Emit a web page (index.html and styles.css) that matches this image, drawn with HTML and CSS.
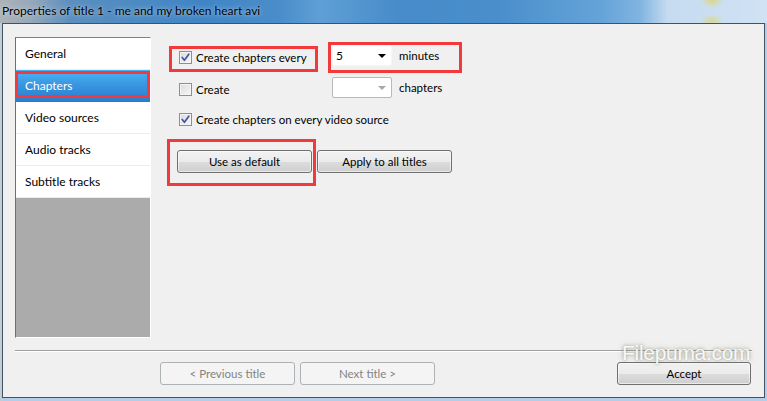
FILE: index.html
```html
<!DOCTYPE html>
<html>
<head>
<meta charset="utf-8">
<title>Properties of title 1</title>
<link rel="stylesheet" href="styles.css">
</head>
<body>
<div class="screen">
  <div class="titlebar"><span class="title-text">Properties of title 1 - me and my broken heart avi</span></div>
  <div class="frame">
    <div class="window">
      <div class="main">
        <ul class="list">
          <li class="item">General</li>
          <li class="item selected"><span class="mark mark-item"></span>Chapters</li>
          <li class="item">Video sources</li>
          <li class="item">Audio tracks</li>
          <li class="item">Subtitle tracks</li>
          <li class="filler"></li>
        </ul>
        <div class="panel">
          <div class="row row1">
            <div class="col-check">
              <label class="check mark-host"><span class="mark mark-check"></span><span class="cb"><svg width="13" height="13" viewBox="0 0 13 13"><path d="M3.2 6.4 L5.4 9.3 L9.8 3.2" fill="none" stroke="#44579a" stroke-width="1.7" stroke-linecap="round" stroke-linejoin="round"/></svg></span><span>Create chapters every</span></label>
            </div>
            <div class="combo-group mark-host"><span class="mark mark-combo"></span><span class="combo focus"><span class="val">5</span><span class="arrow"></span></span><span class="unit">minutes</span></div>
          </div>
          <div class="row row2">
            <div class="col-check">
              <label class="check"><span class="cb"></span><span>Create</span></label>
            </div>
            <div class="combo-group"><span class="combo"><span class="val"></span><span class="arrow gray"></span></span><span class="unit">chapters</span></div>
          </div>
          <div class="row row3">
            <div class="col-check wide">
              <label class="check"><span class="cb"><svg width="13" height="13" viewBox="0 0 13 13"><path d="M3.2 6.4 L5.4 9.3 L9.8 3.2" fill="none" stroke="#44579a" stroke-width="1.7" stroke-linecap="round" stroke-linejoin="round"/></svg></span><span>Create chapters on every video source</span></label>
            </div>
          </div>
          <div class="btn-row">
            <div class="mark-host"><span class="mark mark-btn"></span><button class="btn">Use as default</button></div>
            <button class="btn">Apply to all titles</button>
          </div>
        </div>
      </div>
      <div class="sep"></div>
      <div class="footer">
        <button class="btn disabled prev">&lt; Previous title</button>
        <button class="btn disabled">Next title &gt;</button>
        <button class="btn accept">Accept</button>
      </div>
    </div>
  </div>
  <div class="watermark">Filepuma.com</div>
</div>
</body>
</html>
```

FILE: styles.css
```css
* { box-sizing: border-box; margin: 0; padding: 0; }
html, body { width: 767px; height: 401px; overflow: hidden; }
body {
  font-family: Lato, "Noto Sans", sans-serif;
  font-size: 11.5px;
  color: #000;
  background: #bcd3ea;
}
.screen {
  position: relative;
  width: 767px;
  height: 401px;
  display: flex;
  flex-direction: column;
  background: linear-gradient(90deg, #c4ccd4 0, #c4ccd4 2px, #b4cde8 2px);
}
.titlebar {
  height: 23px;
  flex: none;
  padding-left: 2px;
  line-height: 21px;
  font-size: 12px;
  background:
    radial-gradient(ellipse 12px 7px at 712px 1px, rgba(222,214,120,.85), rgba(222,214,120,0)),
    radial-gradient(ellipse 12px 7px at 712px 21px, rgba(222,214,120,.75), rgba(222,214,120,0)),
    linear-gradient(90deg, #aeb3b8 0, #97a9ba 30px, #5b8fc0 70px, #3f85c5 200px, #4a8dca 280px, #5f9fd6 320px, #478bca 400px, #4a8fcc 500px, #64a3d8 600px, #80b4e0 640px, #c6dbf0 668px, #d0e2f4 767px);
}
.title-text {
  text-shadow: 0 0 6px rgba(255,255,255,.55), 0 0 2px rgba(255,255,255,.4);
}
.frame {
  flex: 1;
  display: flex;
  padding: 0 2px 3px 2px;
}
.window {
  flex: 1;
  display: flex;
  flex-direction: column;
  background: #f0f0f0;
  border: 1px solid #425262;
}
.main {
  display: flex;
  padding: 13px 12px 0 12px;
}
.list {
  list-style: none;
  width: 136px;
  height: 301px;
  display: flex;
  flex-direction: column;
  border-top: 1px solid #828282;
  border-left: 1px solid #6e6e6e;
  border-right: 1px solid #ffffff;
  border-bottom: 1px solid #ffffff;
  background: #ffffff;
  font-size: 12px;
}
.item {
  position: relative;
  height: 32px;
  flex: none;
  padding-left: 9px;
  line-height: 31px;
  border-bottom: 1px solid #ececec;
  background: #fff;
}
.item.selected {
  color: #fff;
  border-bottom-color: #2d7cc9;
  background: linear-gradient(#4bb2f3, #3895e0 50%, #2b7ccd);
}
.filler {
  flex: 1;
  background: #ababab;
}
.mark-host { position: relative; }
.mark {
  position: absolute;
  border: 3px solid #f23a3c;
  pointer-events: none;
}
.mark-item { left: -1px; right: 0; top: 1px; bottom: 3px; }
.mark-check { left: -10px; right: -11px; top: -5px; bottom: -8px; }
.mark-combo { left: -4px; right: -23px; top: -3px; bottom: -7px; }
.mark-btn { left: -10px; right: -4px; top: -11px; bottom: -13px; }

.panel {
  padding: 8px 0 0 26px;
  display: flex;
  flex-direction: column;
}
.row {
  display: flex;
  align-items: center;
  height: 21px;
  white-space: nowrap;
}
.row2 { margin-top: 11px; }
.row3 { margin-top: 9px; }
.col-check {
  width: 155px;
  flex: none;
  padding-left: 2px;
  display: flex;
}
.col-check.wide { width: auto; }
.check {
  display: flex;
  align-items: center;
  gap: 4px;
  margin-top: 3px;
}
.cb {
  width: 13px;
  height: 13px;
  flex: none;
  border: 1px solid #8e8f8f;
  background: linear-gradient(135deg, #dcdcdc, #f6f6f6);
  box-shadow: inset 0 0 0 1px #f4f4f4;
  position: relative;
}
.cb svg { position: absolute; left: -1px; top: -1px; }
.combo-group {
  display: flex;
  align-items: center;
  gap: 7px;
}
.combo {
  width: 60px;
  height: 21px;
  display: flex;
  align-items: center;
  justify-content: space-between;
  padding: 0 5px 0 3px;
  background: #fff;
  border: 1px solid #b9b9b9;
  border-radius: 2px;
  font-size: 12px;
}
.combo.focus { border-color: #f6f6f6; }
.arrow {
  width: 0;
  height: 0;
  border-left: 4px solid transparent;
  border-right: 4px solid transparent;
  border-top: 4px solid #000;
}
.arrow.gray { border-top-color: #a8a8a8; }
.btn-row {
  display: flex;
  gap: 5px;
  margin-top: 22px;
}
.btn {
  width: 135px;
  height: 23px;
  font-family: inherit;
  font-size: 11.5px;
  color: #000;
  border: 1px solid #707070;
  border-radius: 3px;
  background: linear-gradient(#f2f2f2, #ebebeb 50%, #dddddd 50%, #cfcfcf);
  box-shadow: inset 0 0 0 1px rgba(255,255,255,.55);
}
.btn.disabled {
  color: #838383;
  border-color: #adb2b5;
  background: #f4f4f4;
  box-shadow: none;
}
.sep {
  margin: 12px 12px 0 12px;
  height: 2px;
  border-top: 1px solid #a0a0a0;
  border-bottom: 1px solid #ffffff;
}
.footer {
  display: flex;
  gap: 5px;
  padding: 10px 12px 0 12px;
}
.prev { margin-left: 145px; }
.accept { margin-left: auto; width: 134px; margin-right: 1px; }
.watermark {
  position: absolute;
  left: 622px;
  top: 341px;
  font-family: "Liberation Sans", Arial, sans-serif;
  font-size: 21px;
  color: rgba(255,255,255,.92);
  text-shadow: 0 0 3px rgba(120,120,100,.7), 0 0 6px rgba(120,120,100,.4);
  letter-spacing: -0.3px;
}
```
